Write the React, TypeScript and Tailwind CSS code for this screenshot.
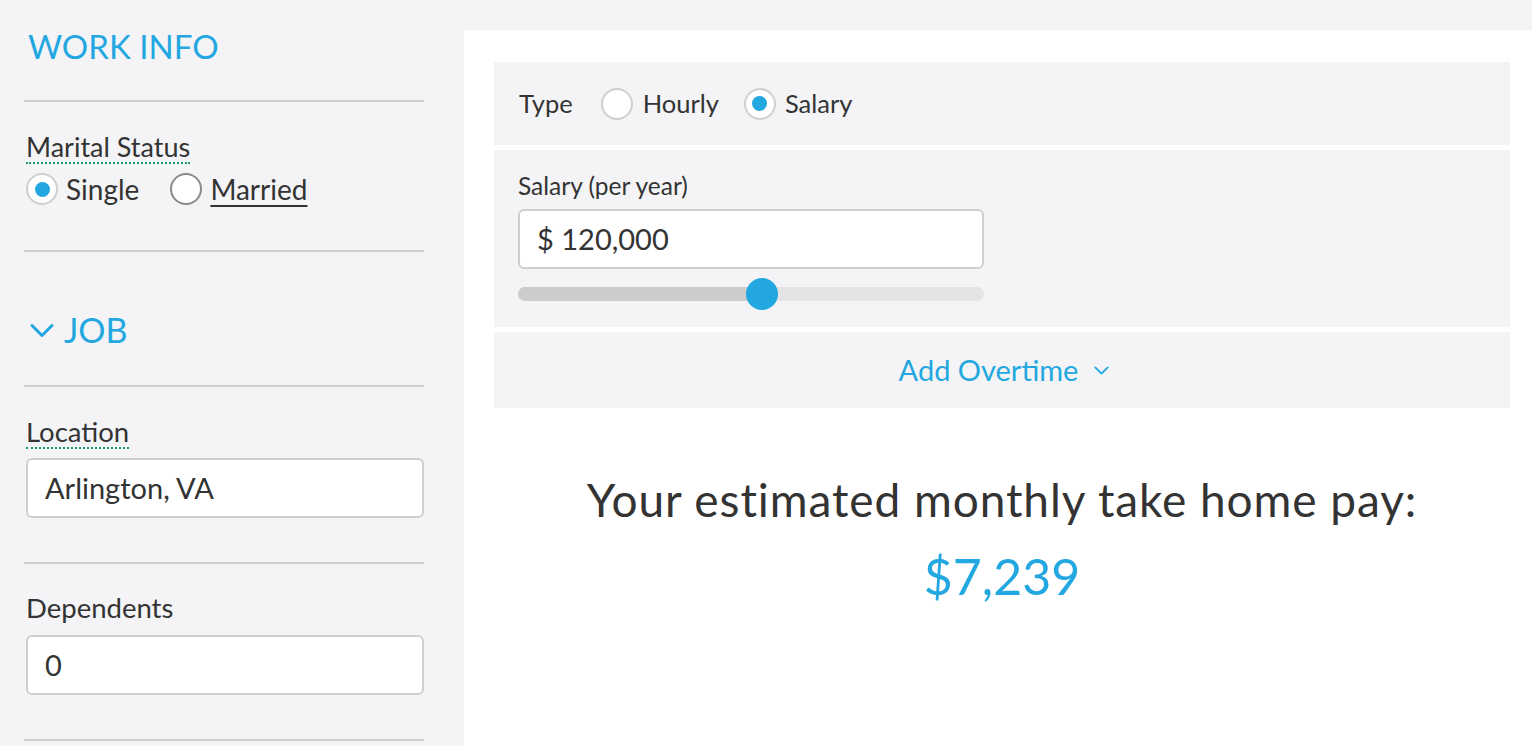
import { ReactNode } from 'react';

const font = "font-['Lato','Open_Sans',sans-serif]";

function Radio({ checked, dark = false }: { checked?: boolean; dark?: boolean }) {
  return (
    <span
      className={`flex h-[32px] w-[32px] shrink-0 items-center justify-center rounded-full border-2 bg-white ${
        dark ? 'border-[#8a8a8a]' : 'border-[#cfcfcf]'
      }`}
    >
      {checked && <span className="h-[15px] w-[15px] rounded-full bg-[#22a7e0]" />}
    </span>
  );
}

function Divider() {
  return <div className="h-[2px] w-full bg-[#cfcfcf]" />;
}

function Field({ children }: { children: ReactNode }) {
  return (
    <div className="flex h-[60px] w-full items-center rounded-[6px] border-2 border-[#cfcfcf] bg-white px-[17px] text-[29px] text-[#333]">
      {children}
    </div>
  );
}

function Chevron({ className }: { className: string }) {
  return (
    <svg viewBox="0 0 24 14" className={className} fill="none" stroke="currentColor" strokeWidth="3" strokeLinecap="round" strokeLinejoin="round">
      <path d="M2 2l10 10L22 2" />
    </svg>
  );
}

export default function App() {
  return (
    <div className={`flex min-h-screen bg-[#f4f4f6] text-[#333] ${font}`}>
      {/* left side: work info */}
      <aside className="w-[464px] shrink-0 pl-[24px] pr-[40px]">
        <div className="h-[100px] pl-[4px] pt-[26px]">
          <h2 className="text-[33px] leading-[40px] text-[#22a7e0]">WORK INFO</h2>
        </div>
        <Divider />

        <div className="h-[148px] pl-[2px] pt-[30px]">
          <span className="inline-block border-b-2 border-dotted border-[#1a9c6a] text-[27px] leading-[30px]">
            Marital Status
          </span>
          <div className="mt-[9px] flex items-center text-[28px]">
            <Radio checked />
            <span className="ml-[8px] leading-[32px]">Single</span>
            <span className="ml-[31px]">
              <Radio dark />
            </span>
            <span className="ml-[8px] leading-[32px] underline decoration-2 underline-offset-[5px]">Married</span>
          </div>
        </div>
        <Divider />

        <div className="h-[133px] pl-[6px] pt-[58px]">
          <div className="flex items-center text-[#22a7e0]">
            <Chevron className="h-[15px] w-[24px]" />
            <span className="ml-[10px] text-[34px] leading-[40px]">JOB</span>
          </div>
        </div>
        <Divider />

        <div className="h-[175px] pl-[2px] pt-[30px]">
          <span className="inline-block border-b-2 border-dotted border-[#1a9c6a] text-[27.5px] leading-[30px]">
            Location
          </span>
          <div className="mt-[9px]">
            <Field>Arlington, VA</Field>
          </div>
        </div>
        <Divider />

        <div className="h-[175px] pl-[2px] pt-[29px]">
          <span className="block text-[27.5px] leading-[30px]">Dependents</span>
          <div className="mt-[12px]">
            <Field>0</Field>
          </div>
        </div>
        <Divider />
      </aside>

      {/* right side: pay */}
      <main className="mt-[30px] flex-1 bg-white pl-[30px] pr-[22px] pt-[32px]">
        <div className="flex flex-col gap-[5px]">
          <div className="flex h-[83px] items-center bg-[#f4f4f6] pl-[25px] text-[25.5px]">
            <span>Type</span>
            <span className="ml-[28px]">
              <Radio />
            </span>
            <span className="ml-[10px]">Hourly</span>
            <span className="ml-[25px]">
              <Radio checked />
            </span>
            <span className="ml-[9px]">Salary</span>
          </div>

          <div className="h-[177px] bg-[#f4f4f6] pl-[24px] pt-[22px]">
            <div className="text-[24.5px] leading-[28px]">Salary (per year)</div>
            <div className="mt-[9px] w-[466px]">
              <Field>$ 120,000</Field>
            </div>
            <div className="relative mt-[9px] flex h-[32px] w-[466px] items-center">
              <div className="flex h-[14px] w-full overflow-hidden rounded-full bg-[#e4e4e4]">
                <div className="h-full w-[244px] bg-[#cccccc]" />
              </div>
              <div className="absolute left-[228px] top-0 h-[32px] w-[32px] rounded-full bg-[#22a7e0]" />
            </div>
          </div>

          <div className="flex h-[76px] items-center justify-center bg-[#f4f4f6] pl-[4px] text-[29px] text-[#22a7e0]">
            <span>Add Overtime</span>
            <Chevron className="ml-[16px] h-[9px] w-[15px]" />
          </div>
        </div>

        <div className="pt-[64px] text-center">
          <div className="text-[46px] leading-[56px] tracking-[0.02em]">Your estimated monthly take home pay:</div>
          <div className="mt-[20px] text-[50px] leading-[56px] text-[#22a7e0]">$7,239</div>
        </div>
      </main>
    </div>
  );
}
